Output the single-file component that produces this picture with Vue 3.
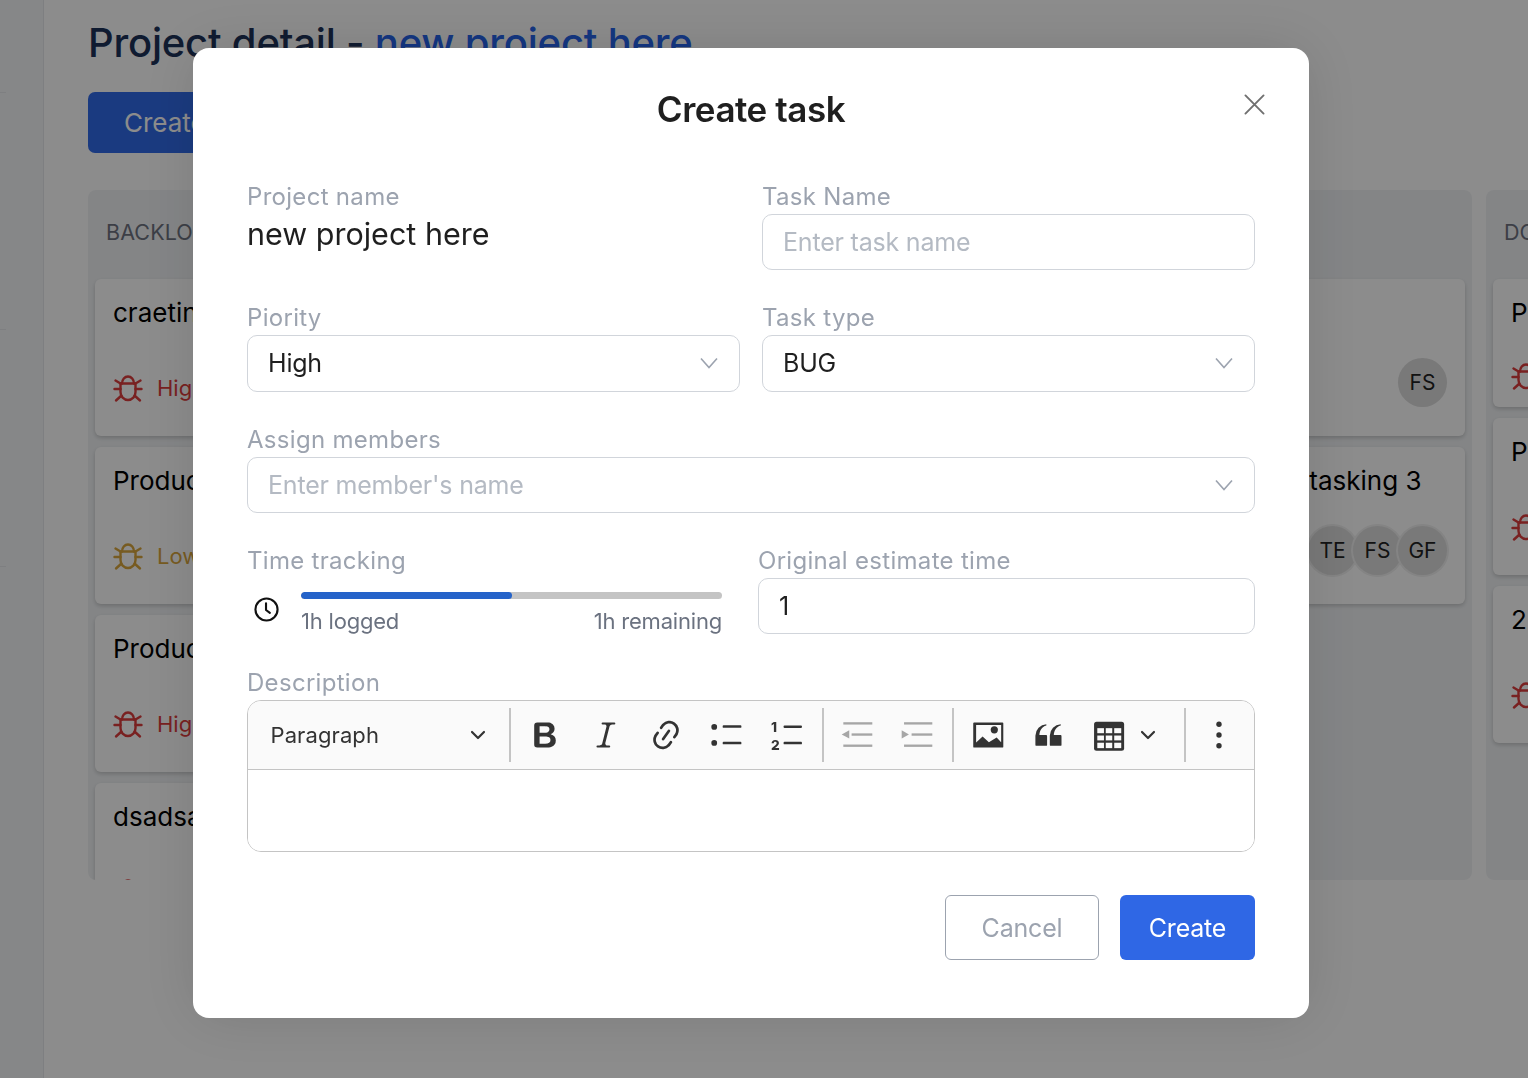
<template>
  <div class="page">
    <aside class="sidebar">
      <div class="side-item"></div>
      <div class="side-item tall"></div>
      <div class="side-item tall"></div>
    </aside>

    <main class="main">
      <h1 class="page-title">Project detail - <span>new project here</span></h1>
      <button class="main-btn">Create task</button>

      <div class="board">
        <section v-for="col in columns" :key="col.name" class="column">
          <h3>{{ col.name }}</h3>
          <div class="cards">
            <article v-for="card in col.cards" :key="card.title" class="card" :class="{ short: card.short }">
              <p class="card-title">{{ card.title }}</p>
              <div class="card-foot">
                <div class="prio" :class="card.prio.toLowerCase()">
                  <svg class="bug" viewBox="0 0 30 30" fill="none" stroke="currentColor" stroke-width="2.400" stroke-linecap="round" stroke-linejoin="round">
                    <path d="M9 10.500c0-4 2.700-7 6-7s6 3 6 7" />
                    <path d="M7.500 10.500h15v8.500c0 4.500-3.300 8-7.500 8s-7.500-3.500-7.500-8z" />
                    <path d="M7.500 16H1.500M22.500 16h6M7.500 10.500 2.500 7.500M22.500 10.500l5-3M8.500 22.500 3 27.500M21.500 22.500l5.500 5" />
                  </svg>
                  <span>{{ card.prio }}</span>
                </div>
                <div class="avatars">
                  <span v-for="m in card.members" :key="m" class="avatar">{{ m }}</span>
                </div>
              </div>
            </article>
          </div>
        </section>
      </div>
    </main>

    <div class="overlay">
      <div class="modal">
        <h2 class="modal-title">Create task</h2>
        <svg class="close" viewBox="0 0 22 22" fill="none" stroke="#707070" stroke-width="2" stroke-linecap="round">
          <path d="M1.500 1.500l19 19M20.500 1.500l-19 19" />
        </svg>

        <div class="form">
          <div class="row two">
            <div class="field">
              <label>Project name</label>
              <div class="project-value">new project here</div>
            </div>
            <div class="field">
              <label>Task Name</label>
              <div class="input muted">Enter task name</div>
            </div>
          </div>

          <div class="row two">
            <div class="field">
              <label>Piority</label>
              <div class="input select">High
                <svg class="caret" viewBox="0 0 20 12" fill="none" stroke="#9ca3af" stroke-width="1.600"><path d="M2 1.500l8 9 8-9" /></svg>
              </div>
            </div>
            <div class="field">
              <label>Task type</label>
              <div class="input select">BUG
                <svg class="caret" viewBox="0 0 20 12" fill="none" stroke="#9ca3af" stroke-width="1.600"><path d="M2 1.500l8 9 8-9" /></svg>
              </div>
            </div>
          </div>

          <div class="row">
            <div class="field">
              <label>Assign members</label>
              <div class="input select muted">Enter member's name
                <svg class="caret" viewBox="0 0 20 12" fill="none" stroke="#9ca3af" stroke-width="1.600"><path d="M2 1.500l8 9 8-9" /></svg>
              </div>
            </div>
          </div>

          <div class="row time-row">
            <div class="field">
              <label>Time tracking</label>
              <div class="tracker">
                <svg class="clock" viewBox="0 0 26 26" fill="none" stroke="#111" stroke-width="2.200" stroke-linecap="round" stroke-linejoin="round">
                  <circle cx="13" cy="13" r="11.500" />
                  <path d="M12.500 6.500v7l4 3" />
                </svg>
                <div class="track-body">
                  <div class="bar"><div class="bar-fill" :style="{ width: logged + '%' }"></div></div>
                  <div class="track-text"><span>1h logged</span><span>1h remaining</span></div>
                </div>
              </div>
            </div>
            <div class="field">
              <label>Original estimate time</label>
              <div class="input">1</div>
            </div>
          </div>

          <div class="row desc-row">
            <div class="field">
              <label>Description</label>
              <div class="editor">
                <div class="toolbar">
                  <div class="para">
                    <span>Paragraph</span>
                    <svg class="chev" viewBox="0 0 16 10" fill="none" stroke="#333" stroke-width="2.200" stroke-linecap="round" stroke-linejoin="round"><path d="M2 2l6 6 6-6" /></svg>
                  </div>
                  <i class="sep"></i>
                  <button class="tool">
                    <svg viewBox="0 0 20 20" fill="#333"><path d="M10.187 17H5.773c-.637 0-1.092-.138-1.364-.415-.273-.277-.409-.718-.409-1.323V4.738c0-.617.14-1.062.419-1.332.279-.27.73-.406 1.354-.406h4.680c.690 0 1.288.041 1.793.124.506.083.960.242 1.360.478.341.197.644.447.906.750a3.262 3.262 0 0 1 .808 2.162c0 1.401-.722 2.426-2.167 3.075C15.050 10.175 16 11.315 16 13.010a3.756 3.756 0 0 1-2.296 3.504 6.100 6.100 0 0 1-1.517.377c-.571.073-1.238.110-2 .110zm-.217-6.217H7v4.087h3.069c1.977 0 2.965-.690 2.965-2.072 0-.707-.256-1.220-.768-1.537-.512-.319-1.277-.478-2.296-.478zM7 5.130v3.619h2.606c.729 0 1.292-.067 1.690-.200a1.600 1.600 0 0 0 .910-.765c.165-.267.247-.566.247-.897 0-.707-.260-1.176-.778-1.409-.519-.232-1.310-.348-2.375-.348H7z" /></svg>
                  </button>
                  <button class="tool">
                    <svg viewBox="0 0 20 20" fill="#333"><path d="m9.586 14.633.021.004c-.036.335.095.655.393.962.082.083.173.150.274.201h1.474a.600.600 0 1 1 0 1.200H5.304a.600.600 0 0 1 0-1.200h1.150c.474-.070.809-.182 1.005-.334.157-.122.291-.320.404-.597l2.416-9.550a1.053 1.053 0 0 0-.281-.823 1.120 1.120 0 0 0-.442-.296H8.150a.600.600 0 0 1 0-1.200h6.443a.600.600 0 1 1 0 1.200h-1.195c-.376.056-.650.155-.823.296-.215.175-.423.439-.623.790l-2.366 9.347z" /></svg>
                  </button>
                  <button class="tool">
                    <svg viewBox="0 0 20 20" fill="#333"><path d="m11.077 15 .991-1.416a.750.750 0 1 1 1.229.860l-1.148 1.640a.748.748 0 0 1-.217.206 5.251 5.251 0 0 1-8.503-5.955.741.741 0 0 1 .120-.274l1.147-1.639a.750.750 0 1 1 1.228.860L4.933 10.700l.006.003a3.750 3.750 0 0 0 6.132 4.294l.006.003zm5.494-5.335a.748.748 0 0 1-.120.274l-1.147 1.639a.750.750 0 1 1-1.228-.860l.860-1.230a3.750 3.750 0 0 0-6.144-4.301l-.860 1.229a.750.750 0 0 1-1.229-.860l1.148-1.640a.748.748 0 0 1 .217-.206 5.251 5.251 0 0 1 8.503 5.955zm-4.563-2.532a.750.750 0 0 1 .184 1.045l-3.155 4.505a.750.750 0 1 1-1.229-.860l3.155-4.506a.750.750 0 0 1 1.045-.184z" /></svg>
                  </button>
                  <button class="tool">
                    <svg viewBox="0 0 20 20" fill="#333"><circle cx="2.900" cy="5.500" r="1.600" /><circle cx="2.900" cy="14.400" r="1.600" /><rect x="7.600" y="4.600" width="10.400" height="1.400" rx=".5" /><rect x="7.600" y="13.800" width="10.400" height="1.400" rx=".5" /></svg>
                  </button>
                  <button class="tool">
                    <svg viewBox="0 0 20 20" fill="#333"><text x="1.100" y="8.300" class="num">1</text><text x="1.100" y="18.300" class="num">2</text><rect x="8.100" y="4.700" width="10.200" height="1.400" rx=".5" /><rect x="8.100" y="13.800" width="10.200" height="1.400" rx=".5" /></svg>
                  </button>
                  <i class="sep sep-tight"></i>
                  <button class="tool">
                    <svg viewBox="0 0 20 20" fill="#a6a6a6"><rect x="2.400" y="2.900" width="16.100" height="1.300" /><rect x="7" y="9.100" width="11.500" height="1.300" /><rect x="2.400" y="15.300" width="16.100" height="1.300" /><path d="M1.500 9.700 5.700 7.300V12z" /></svg>
                  </button>
                  <button class="tool">
                    <svg viewBox="0 0 20 20" fill="#a6a6a6"><rect x="2.800" y="2.900" width="15.700" height="1.300" /><rect x="7" y="9.100" width="11.500" height="1.300" /><rect x="2.800" y="15.300" width="15.700" height="1.300" /><path d="M5.500 9.700 1.500 7.300V12z" /></svg>
                  </button>
                  <i class="sep"></i>
                  <button class="tool">
                    <svg viewBox="0 0 20 20" fill="#333"><path fill-rule="evenodd" d="M2.300 3h15.700a.5.500 0 0 1 .5.500v13a.5.500 0 0 1-.5.500H2.300a.5.500 0 0 1-.5-.500v-13a.5.500 0 0 1 .5-.500zM3.400 4.400v9.800L7 10.800l3.500 3.200 4.300-2.600 2.500 2.600V4.400z" /><circle cx="13.500" cy="7.100" r="2" /></svg>
                  </button>
                  <button class="tool">
                    <svg viewBox="0 0 20 20" fill="#333"><path d="M3 10.423a6.500 6.500 0 0 1 6.056-6.408l.038.670C6.448 5.423 5.354 7.663 5.220 10H9c.552 0 .5.432.5.986v4.511c0 .554-.448.503-1 .503h-5c-.552 0-.5-.449-.5-1.003v-4.574zm8 0a6.500 6.500 0 0 1 6.056-6.408l.038.670c-2.646.739-3.740 2.979-3.873 5.315H17c.552 0 .5.432.5.986v4.511c0 .554-.448.503-1 .503h-5c-.552 0-.5-.449-.5-1.003v-4.574z" /></svg>
                  </button>
                  <button class="tool table-tool">
                    <svg viewBox="0 0 20 20">
                      <rect x="1.700" y="2.700" width="16.700" height="16.100" rx="1.400" fill="#333" />
                      <g fill="#fafafa">
                        <rect v-for="c in tableCells" :key="c.x + '-' + c.y" :x="c.x" :y="c.y" :width="c.w" :height="c.h" />
                      </g>
                    </svg>
                    <svg class="chev" viewBox="0 0 16 10" fill="none" stroke="#333" stroke-width="2.200" stroke-linecap="round" stroke-linejoin="round"><path d="M2 2l6 6 6-6" /></svg>
                  </button>
                  <i class="sep sep-last"></i>
                  <button class="tool">
                    <svg viewBox="0 0 20 20" fill="#333"><circle cx="10" cy="4" r="1.500" /><circle cx="10" cy="10" r="1.500" /><circle cx="10" cy="16" r="1.500" /></svg>
                  </button>
                </div>
                <div class="editor-body"></div>
              </div>
            </div>
          </div>
        </div>

        <div class="actions">
          <button class="btn cancel">Cancel</button>
          <button class="btn create">Create</button>
        </div>
      </div>
    </div>
  </div>
</template>

<script setup>
import { ref } from 'vue'

const logged = ref(50)

// 3x3 white cells of the table icon
const tableCells = []
for (const y of [[6.2, 2.8], [10.3, 2.7], [14.3, 3]]) {
  for (const x of [[3.5, 3.7], [8.2, 3.6], [12.9, 3.9]]) {
    tableCells.push({ x: x[0], w: x[1], y: y[0], h: y[1] })
  }
}

const columns = [
  {
    name: 'BACKLOG',
    cards: [
      { title: 'craeting task', prio: 'High', members: [] },
      { title: 'Product list', prio: 'Low', members: [] },
      { title: 'Product page', prio: 'High', members: [] },
      { title: 'dsadsa', prio: 'High', members: [] }
    ]
  },
  {
    name: 'SELECTED',
    cards: [{ title: 'Landing page', prio: 'High', members: [] }]
  },
  {
    name: 'IN PROGRESS',
    cards: [
      { title: 'Fix login', prio: 'High', members: ['FS'] },
      { title: 'Testing with six multi tasking 3', prio: 'High', members: ['TE', 'FS', 'GF'] }
    ]
  },
  {
    name: 'DONE',
    cards: [
      { title: 'Project', prio: 'High', members: [], short: true },
      { title: 'Page', prio: 'High', members: [] },
      { title: '2 task', prio: 'High', members: [] }
    ]
  }
]
</script>

<style>
html, body {
  margin: 0;
  overflow: hidden;
}
</style>

<style scoped>
.page {
  display: flex;
  width: 1528px;
  height: 1078px;
  overflow: hidden;
  background: #fff;
  font-family: Inter, "Liberation Sans", sans-serif;
}

.sidebar {
  flex: 0 0 43px;
  background: #f4f6f8;
  border-right: 1px solid #e5e7eb;
}
.side-item {
  width: 6px;
  height: 92px;
  border-bottom: 1px solid #e5e7eb;
}
.side-item.tall {
  height: 236px;
}

.main {
  flex: none;
  width: 1484px;
  padding-left: 44px;
  box-sizing: border-box;
}
.page-title {
  margin: 17px 0 0;
  font-size: 40px;
  line-height: 52px;
  font-weight: 500;
  letter-spacing: -0.2px;
  color: #1d3259;
  white-space: nowrap;
}
.page-title span {
  color: #2563eb;
}
.main-btn {
  display: block;
  width: 230px;
  height: 61px;
  margin-top: 23px;
  padding: 0 36px;
  text-align: left;
  border: none;
  border-radius: 7px;
  background: #316be9;
  color: #fff;
  font: 400 26px Inter, sans-serif;
}

.board {
  display: flex;
  gap: 14px;
  margin-top: 37px;
  height: 690px;
}
.column {
  flex: 0 0 452px;
  height: 690px;
  overflow: hidden;
  box-sizing: border-box;
  padding: 0 7px;
  border-radius: 8px;
  background: #f1f3f5;
}
.column h3 {
  margin: 0;
  height: 89px;
  padding-left: 11px;
  font-size: 21.500px;
  line-height: 85px;
  font-weight: 400;
  letter-spacing: 0.1px;
  color: #6d7280;
}
.cards {
  display: flex;
  flex-direction: column;
  gap: 11px;
}
.card {
  flex: none;
  height: 157px;
  box-sizing: border-box;
  padding: 17px 18px 0;
  border-radius: 6px;
  background: #fff;
  box-shadow: 0 2px 4px rgba(0, 0, 0, 0.18);
}
.card.short {
  height: 128px;
}
.card-title {
  margin: 0;
  font-size: 26px;
  line-height: 34px;
  color: #000;
  white-space: nowrap;
}
.card-foot {
  display: flex;
  align-items: center;
  justify-content: space-between;
  margin-top: 28px;
  height: 49px;
}
.card.short .card-foot {
  margin-top: 16px;
}
.prio {
  display: flex;
  align-items: center;
  gap: 14px;
  margin-top: 10px;
  font-size: 22px;
}
.prio.high {
  color: #dc3c3c;
}
.prio.low {
  color: #d9a63c;
}
.bug {
  width: 30px;
  height: 30px;
}
.avatars {
  display: flex;
}
.avatar {
  display: flex;
  align-items: center;
  justify-content: center;
  width: 49px;
  height: 49px;
  margin-left: -4px;
  border-radius: 50%;
  background: #dcdcdc;
  box-shadow: 0 0 0 2px #f0f0f0;
  font-size: 21px;
  color: #222;
}
.avatar:only-child {
  box-shadow: none;
}

.overlay {
  position: fixed;
  inset: 0;
  background: rgba(0, 0, 0, 0.45);
}
.modal {
  position: absolute;
  left: 193px;
  top: 48px;
  width: 1116px;
  height: 970px;
  box-sizing: border-box;
  padding: 36px 54px 0;
  border-radius: 16px;
  background: #fff;
  box-shadow: 0 0 60px rgba(0, 0, 0, 0.12);
}
.modal-title {
  margin: 0;
  text-align: center;
  font-size: 35px;
  line-height: 50px;
  font-weight: 600;
  letter-spacing: -0.45px;
  color: #1f1f1f;
}
.close {
  position: absolute;
  top: 46px;
  right: 44px;
  width: 21px;
  height: 21px;
}
.form {
  display: flex;
  flex-direction: column;
  gap: 34px;
  margin-top: 49px;
}
.row.two {
  display: grid;
  grid-template-columns: 493px 493px;
  gap: 22px;
}
.row.two .select {
  height: 57px;
}
.row.time-row {
  display: grid;
  grid-template-columns: 475px 497px;
  gap: 36px;
}
.desc-row {
  margin-top: 1px;
}
.field label {
  display: block;
  height: 31px;
  font-size: 24px;
  line-height: 27px;
  letter-spacing: 0.3px;
  color: #9ca3af;
}
.project-value {
  margin-top: 2px;
  font-size: 30.500px;
  line-height: 36px;
  color: #1f1f1f;
}
.input {
  position: relative;
  height: 56px;
  box-sizing: border-box;
  padding-left: 20px;
  border: 1px solid #d1d5db;
  border-radius: 10px;
  font-size: 25px;
  line-height: 54px;
  letter-spacing: -0.2px;
  color: #1f1f1f;
}
.input.muted {
  color: #b4bac3;
}
.caret {
  position: absolute;
  right: 20px;
  top: 21px;
  width: 20px;
  height: 12px;
}

.tracker {
  display: flex;
  align-items: flex-start;
  gap: 22px;
  padding: 14px 0 0 7px;
}
.clock {
  width: 25px;
  height: 25px;
  margin-top: 5px;
  flex: none;
}
.track-body {
  flex: 1;
}
.bar {
  height: 7px;
  border-radius: 4px;
  background: #c4c4c4;
  overflow: hidden;
}
.bar-fill {
  height: 100%;
  border-radius: 4px;
  background: #2563c9;
}
.track-text {
  display: flex;
  justify-content: space-between;
  margin-top: 10px;
  font-size: 22px;
  line-height: 25px;
  letter-spacing: -0.2px;
  color: #6b7280;
}

.editor {
  height: 152px;
  box-sizing: border-box;
  border: 1px solid #c4c4c4;
  border-radius: 14px;
  overflow: hidden;
}
.toolbar {
  display: flex;
  align-items: center;
  height: 69px;
  box-sizing: border-box;
  border-bottom: 1px solid #c4c4c4;
  background: #fafafa;
}
.para {
  display: flex;
  align-items: center;
  justify-content: space-between;
  flex: 0 0 261px;
  box-sizing: border-box;
  padding: 0 23px 0 22.500px;
  font-size: 22px;
  letter-spacing: 0.1px;
  color: #333;
}
.chev {
  flex: none;
  width: 16px;
  height: 10px;
}
.sep {
  flex: none;
  width: 2px;
  height: 54px;
  margin: 0 4px;
  background: #c4c4c4;
}
.para + .sep {
  margin-left: 0;
}
.sep-tight {
  margin-right: 3px;
}
.sep-last {
  margin-right: 3px;
}
.tool {
  display: flex;
  align-items: center;
  justify-content: center;
  flex: none;
  width: 60.500px;
  height: 54px;
  padding: 0;
  border: none;
  background: none;
}
.tool > svg:first-child {
  flex: none;
  width: 36px;
  height: 36px;
}
.table-tool {
  width: 101px;
  justify-content: flex-start;
  gap: 12.500px;
  padding-left: 12.500px;
}
.num {
  font: 800 7.600px Inter, sans-serif;
}
.editor-body {
  height: 81px;
  background: #fff;
}

.actions {
  display: flex;
  justify-content: flex-end;
  gap: 21px;
  margin-top: 43px;
}
.btn {
  height: 65px;
  border-radius: 6px;
  font: 400 25px Inter, sans-serif;
  letter-spacing: -0.2px;
}
.cancel {
  width: 154px;
  border: 1px solid #9ca3af;
  background: #fff;
  color: #9ca3af;
}
.create {
  width: 135px;
  border: none;
  background: #2f67e5;
  color: #fff;
}
</style>
